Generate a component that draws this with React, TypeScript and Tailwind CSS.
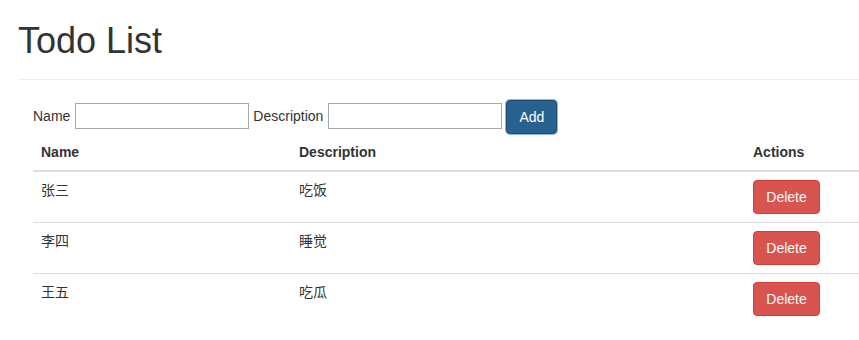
import React from "react";

const rows = [
  { name: "张三", desc: "吃饭" },
  { name: "李四", desc: "睡觉" },
  { name: "王五", desc: "吃瓜" },
];

export default function App() {
  return (
    <div
      className="w-[859px] h-[340px] overflow-hidden bg-white text-[14px] leading-[20px] text-[#333]"
      style={{ fontFamily: '"Liberation Sans", Arial, "Noto Sans CJK SC", sans-serif' }}
    >
      <div className="pl-[18px]">
        <h1 className="w-[900px] mt-[20px] pb-[17px] border-b border-[#eee] text-[36px] leading-[42px] font-normal text-[#333]">
          Todo List
        </h1>
      </div>
      <div className="pl-[33px]">
        <div className="mt-[20px] flex items-start h-[34px]">
          <label className="mr-[5px] mt-[6px]">Name</label>
          <input className="w-[174px] h-[26px] border border-[#a9a9a9] mr-[4px] outline-none px-[2px] mt-[3px]" />
          <label className="mr-[5px] mt-[6px]">Description</label>
          <input className="w-[174px] h-[26px] border border-[#a9a9a9] mr-[4px] outline-none px-[2px] mt-[3px]" />
          <button className="w-[51px] h-[34px] rounded-[4px] bg-[#286090] border border-[#204d74] text-white shadow-[0_0_0_1px_#8db4ee]">
            Add
          </button>
        </div>
        <table className="w-[880px] border-collapse">
          <thead>
            <tr className="border-b-2 border-[#ddd]">
              <th className="w-[258px] text-left font-bold px-[8px] py-[8px]">Name</th>
              <th className="w-[454px] text-left font-bold px-[8px] py-[8px]">Description</th>
              <th className="text-left font-bold px-[8px] py-[8px]">Actions</th>
            </tr>
          </thead>
          <tbody>
            {rows.map((r, i) => (
              <tr key={i} className={i < rows.length - 1 ? "border-b border-[#ddd]" : ""}>
                <td className="align-top px-[8px] py-[8px]">{r.name}</td>
                <td className="align-top px-[8px] py-[8px]">{r.desc}</td>
                <td className="align-top px-[8px] py-[8px]">
                  <button className="h-[34px] w-[67px] rounded-[4px] bg-[#d9534f] border border-[#d43f3a] text-white">
                    Delete
                  </button>
                </td>
              </tr>
            ))}
          </tbody>
        </table>
      </div>
    </div>
  );
}
